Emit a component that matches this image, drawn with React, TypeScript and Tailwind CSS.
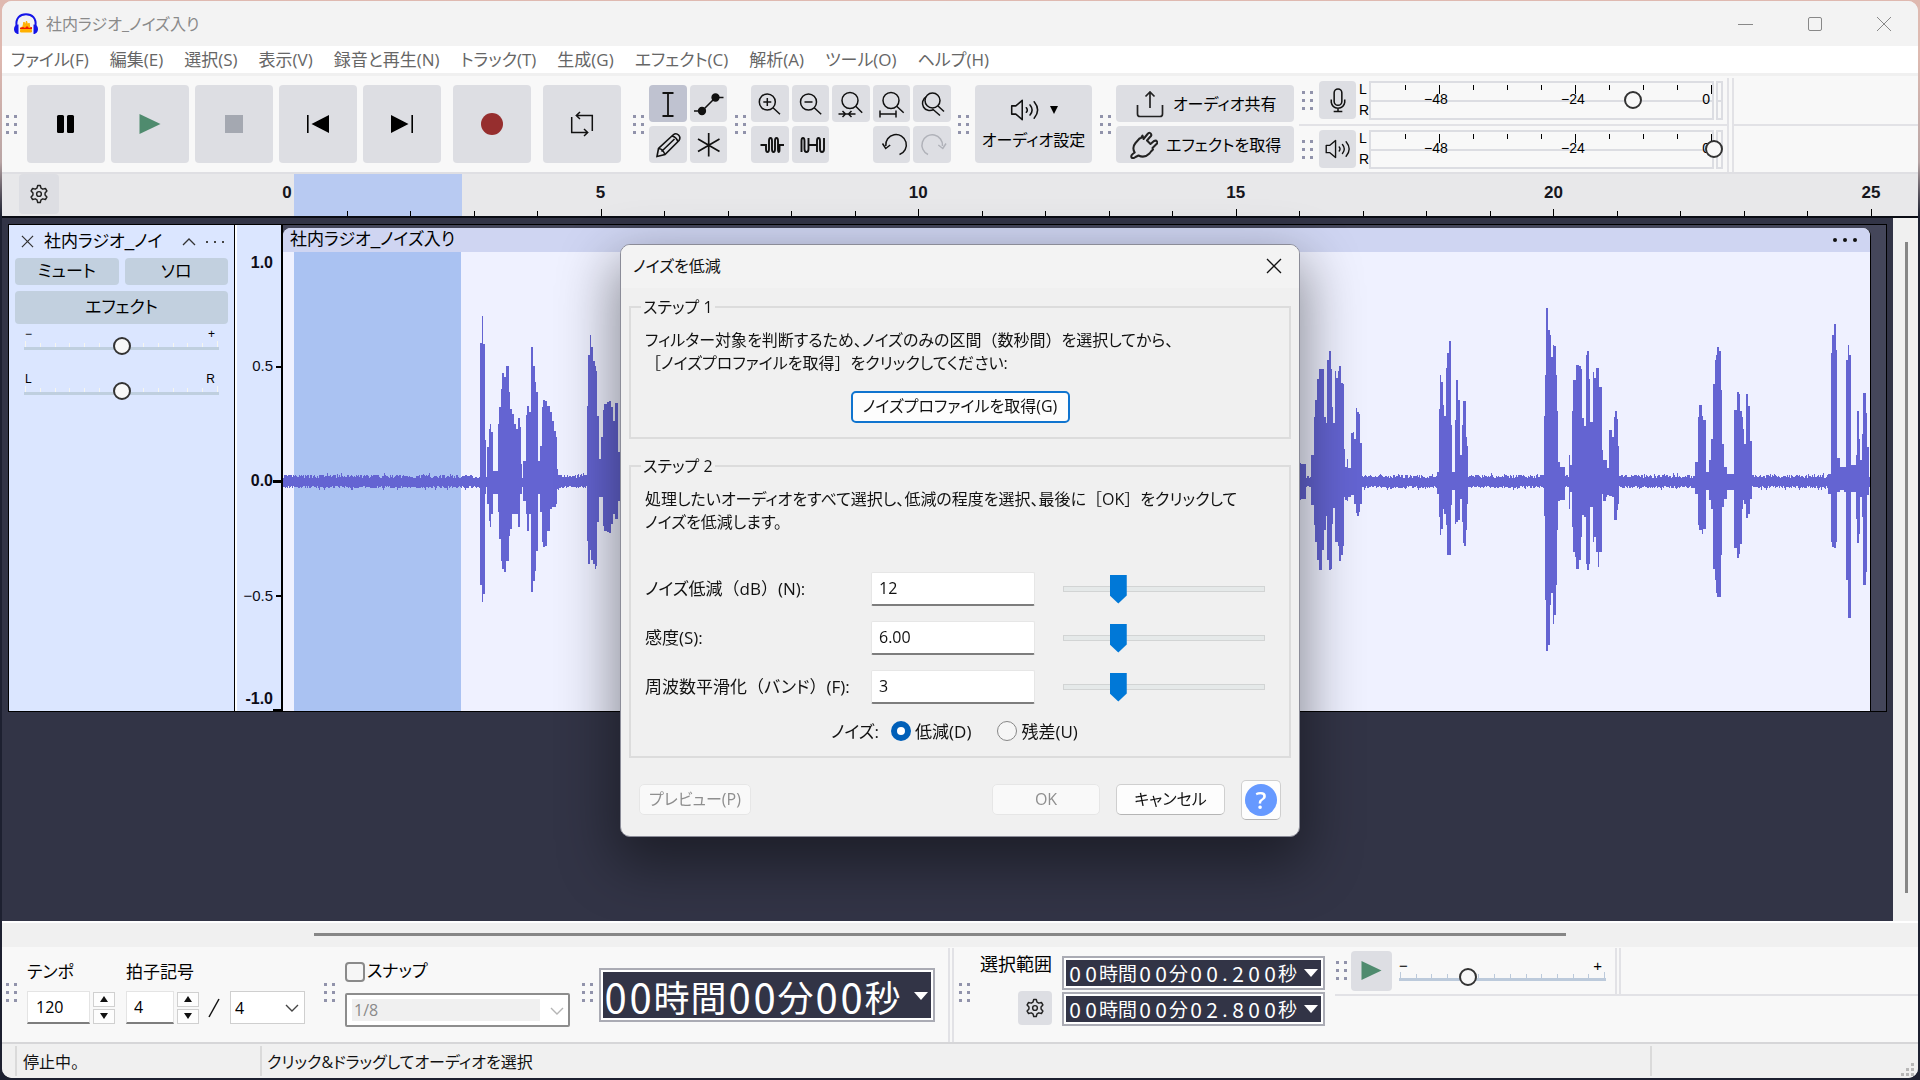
import React from "react";

const FONT = "font-['Open_Sans','Noto_Sans_CJK_JP',sans-serif] [font-feature-settings:'palt']";
const CANVAS_FONT = "font-['Liberation_Sans','Noto_Sans_CJK_JP',sans-serif] [font-feature-settings:'palt']";

/* ---------- waveform ---------- */

type Segment = { origin: number; scale: number; mid: number; steps: string };

// Each step is "x,top,bottom"; it holds until the next one. "x" alone means background noise.
const SEGMENTS: Segment[] = [
  {
    origin: 0, scale: 2.45, mid: 814,
    steps:
      "1160 1176,396,1122 1180,315,1175 1184,400,1150 1188,688,850 1191 1194,710,880 1199,656,930 1201,640,948 1204,665,910 1209,780,850 1219,640,905 1223,590,985 1227,535,1052 1231,487,1075 1236,498,1085 1240,465,1050 1246,545,975 1250,595,955 1255,610,910 1260,640,910 1265,655,910 1269,622,948 1274,650,850 1276,760,850 1280 1282,750,870 1289,612,910 1292,585,960 1297,605,910 1301,409,1145 1307,465,1110 1310,515,1080 1314,545,1020 1319,750,850 1323,705,905 1327,590,995 1331,568,1008 1336,570,1005 1341,587,960 1348,605,895 1353,630,890 1358,662,890 1361,680,880 1365,775,835 1368 1437,585,990 1441,432,1060 1445,374,1018 1449,410,1048 1453,450,1060 1457,465,1075 1460,482,1065 1463,616,935 1467,745,860 1473,680,860 1477,598,945 1481,580,960 1487,575,963 1493,572,967 1498,588,940 1502,630,910 1506,577,925 1513,725,870 1519",
  },
  {
    origin: 1290, scale: 2.489, mid: 785,
    steps:
      "24,727,838 28,730,835 40 52,705,855 60,590,915 63,538,965 67,475,1018 71,447,1050 76,445,1050 80,447,988 85,590,930 89,608,888 93,420,1018 97,393,1050 101,447,1045 105,560,910 107,608,862 111,452,965 115,473,965 119,452,978 123,438,1022 126,487,1005 132,490,978 134,685,830 138,740,840 141,717,843 145,743,830 152,638,825 156,636,825 160,655,850 164,563,878 168,575,887 172,582,875 175,668,850 179 " +
      "367,755,820 370,565,890 374,465,945 377,485,925 380,555,865 384,588,880 388,443,915 392,398,1005 396,362,1005 400,613,855 402,755,810 410,600,910 414,478,905 418,538,900 422,705,835 427,613,905 430,542,968 434,542,977 437,650,928 440,678,850 444 " +
      "632,588,888 635,465,1140 638,262,1293 642,330,1275 646,345,1153 650,410,1118 654,375,1212 657,376,1185 661,465,1095 664,573,928 668,725,843 672,740,840 684 694,705,865 698,735,815 702,573,920 705,480,995 709,478,1010 713,433,1045 720,437,1018 724,447,950 727,592,885 732,617,890 736,405,1030 740,393,1050 743,475,1030 747,605,860 753,456,965 757,474,950 762,442,995 766,443,1040 769,500,995 776,690,820 780,718,843 786,720,830 790,744,825 795,630,827 802,650,830 806,590,900 810,573,900 813,597,870 817,677,850 820 " +
      "1009,725,820 1015,590,915 1018,555,930 1026,587,940 1029,598,925 1036,755,810 1043,718,840 1048,655,865 1053,490,1045 1057,418,1080 1060,405,1118 1064,380,1130 1068,393,1130 1072,510,1005 1075,672,860 1079,740,835 1088,760,810 1105,570,983 1113,515,1013 1117,522,1000 1120,573,970 1124,590,865 1127,625,840 1131,670,850 1135,520,892 1139,556,882 1145,662,835 1149 " +
      "1340,760,820 1347,398,965 1350,345,980 1354,312,983 1358,388,965 1362,713,815 1368,740,810 1380,740,815 1385,420,1080 1389,375,1193 1392,405,1193 1396,735,815 1408,705,895 1411,573,968 1415,655,940 1418,718,830 1424,640,890 1426,519,1095 1434,577,1055 1437,680,825 1441",
  },
];

const CLIP_START = 283;
const CLIP_WIDTH = 1587;

function buildWave(): string {
  let seed = 7;
  const rnd = () => {
    seed = (seed * 16807) % 2147483647;
    return seed / 2147483647;
  };
  const up: number[] = [];
  const down: number[] = [];
  for (let i = 0; i < CLIP_WIDTH; i++) {
    up.push(4 + rnd() * 3.5 + (rnd() > 0.93 ? 2 : 0));
    down.push(4 + rnd() * 2.5 + (rnd() > 0.93 ? 2 : 0));
  }
  for (const seg of SEGMENTS) {
    const steps = seg.steps.split(" ").map((s) => s.split(",").map(Number));
    for (let k = 0; k < steps.length - 1; k++) {
      if (steps[k].length < 3) continue;
      const from = Math.round(seg.origin + steps[k][0] / seg.scale) - CLIP_START;
      const to = Math.round(seg.origin + steps[k + 1][0] / seg.scale) - CLIP_START;
      for (let i = from; i < to && i < CLIP_WIDTH; i++) {
        up[i] = (seg.mid - steps[k][1]) / 3;
        down[i] = (steps[k][2] - seg.mid) / 3;
      }
    }
  }
  const mid = 230;
  return up.map((u, i) => `M${i} ${Math.round(mid - u)}h1V${Math.round(mid + down[i])}h-1z`).join("");
}

const WAVE = buildWave();

/* ---------- small parts ---------- */

function Grip() {
  return (
    <div className="grid shrink-0 grid-cols-2 gap-x-[5px] gap-y-[5px]" aria-hidden="true">
      {[0, 1, 2, 3, 4, 5].map((i) => (
        <span key={i} className="size-[3px] bg-[#9193ab]" />
      ))}
    </div>
  );
}

function BigButton({ label, className = "", children }: { label: string; className?: string; children: React.ReactNode }) {
  return (
    <button aria-label={label} className={`flex h-[78px] w-[78px] shrink-0 items-center justify-center rounded-[4px] bg-[#dddee3] ${className}`}>
      {children}
    </button>
  );
}

function Tool({ label, active = false, dim = false, children }: { label: string; active?: boolean; dim?: boolean; children: React.ReactNode }) {
  return (
    <button aria-label={label} className={`h-[37px] rounded-[4px] ${active ? "bg-[#bfc2d0]" : "bg-[#dddee3]"}`}>
      <svg viewBox="0 0 37 37" className="mx-auto h-[37px] w-[37px]" fill="none" stroke={dim ? "#b0b2b9" : "#111"} strokeWidth="1.5">
        {children}
      </svg>
    </button>
  );
}

function Gear() {
  return (
    <svg viewBox="0 0 24 24" className="size-[22px]" fill="none" stroke="#222" strokeWidth="1.6" strokeLinejoin="round">
      <path d="M9.8 5.6 10.6 2.8h2.8l.8 2.8 1.9 1.1 2.9-.7 1.6 2.6-2 2.2v2.4l2 2.2-1.6 2.6-2.9-.7-1.9 1.1-.8 2.8h-2.8l-.8-2.8-1.9-1.1-2.9.7-1.6-2.6 2-2.2v-2.4l-2-2.2L5 6l2.9.7z" />
      <circle cx="12" cy="12" r="2.6" />
    </svg>
  );
}

function Speaker({ className }: { className: string }) {
  return (
    <svg viewBox="0 0 32 24" className={className} fill="none" stroke="#111" strokeWidth="1.7" strokeLinejoin="round" strokeLinecap="round">
      <path d="M1.500 7.500h4.500L13 1.500v21L6 16.500H1.500z" />
      <path d="M17.500 9.500q2 2.500 0 5M21.500 6.500q4.500 5.500 0 11M26 3q7.500 9 0 18" />
    </svg>
  );
}

function Mic() {
  return (
    <svg viewBox="0 0 18 26" className="h-[25px] w-[18px]" fill="none" stroke="#111" strokeWidth="1.6">
      <rect x="5" y="1" width="8" height="17" rx="4" />
      <path d="M2 12v3q1 6 7 6t7-6v-3M9 21v3.500M4.500 24.500h9" />
    </svg>
  );
}

function TickRail({ color, ticks, className = "" }: { color: string; ticks: string; className?: string }) {
  return (
    <div className={`flex flex-col ${className}`} aria-hidden="true">
      <div className="flex h-[6px] items-end justify-between px-[1px]">
        {Array.from({ length: 14 }, (_, i) => (
          <span key={i} className={`w-px ${ticks} ${i === 0 || i === 13 ? "h-[6px]" : "h-[4px]"}`} />
        ))}
      </div>
      <div className={`h-[3px] ${color}`} />
    </div>
  );
}

const KNOB =
  "appearance-none bg-transparent [&::-webkit-slider-thumb]:size-[18px] [&::-webkit-slider-thumb]:appearance-none [&::-webkit-slider-thumb]:rounded-full [&::-webkit-slider-thumb]:border-2 [&::-webkit-slider-thumb]:border-solid [&::-webkit-slider-thumb]:border-[#333] [&::-webkit-slider-thumb]:bg-[#f8f8f8]";

function TrackSlider({ left, right, label }: { left: string; right: string; label: string }) {
  return (
    <div className="flex flex-col px-[15px]">
      <div className="flex h-[14px] justify-between px-[1px] text-[12px] leading-[14px] text-black">
        <span>{left}</span>
        <span className="pr-[3px]">{right}</span>
      </div>
      <div className="relative">
        <TickRail color="bg-[#bfcfdf]" ticks="bg-[#f5f5ee]" />
        <input type="range" aria-label={label} defaultValue={50} className={`absolute inset-x-0 -top-[4px] m-0 h-[18px] w-full ${KNOB}`} />
      </div>
    </div>
  );
}

function Meter({ label, icon, value }: { label: string; icon: React.ReactNode; value: number }) {
  return (
    <div className="flex items-center pl-[3px]">
      <Grip />
      <button aria-label={label} className="ml-[6px] flex h-[38px] w-[37px] items-center justify-center rounded-[4px] bg-[#dddee3]">
        {icon}
      </button>
      <div className="ml-[3px] flex h-[38px] w-[10px] flex-col justify-between text-[14px] leading-[17px] text-black">
        <span>L</span>
        <span>R</span>
      </div>
      <div className="relative flex w-[354px] gap-[2px]">
        <div className="relative h-[39px] flex-1 border-2 border-[#dcdde2]">
          <div className="absolute inset-x-0 top-[17px] h-[2px] bg-[#dcdde2]" />
          {Array.from({ length: 10 }, (_, i) => (
            <span
              key={i}
              className={`absolute top-[2px] w-px bg-black ${i % 4 === 1 ? "h-[9px]" : "h-[5px]"}`}
              style={{ left: `${10 + i * 9.97}%` }}
            />
          ))}
          <span className="absolute top-[8px] left-[53px] text-[14px] leading-[17px] text-black">−48</span>
          <span className="absolute top-[8px] left-[190px] text-[14px] leading-[17px] text-black">−24</span>
          <span className="absolute top-[8px] right-[2px] text-[14px] leading-[17px] text-black">0</span>
        </div>
        <div className="flex h-[39px] w-[7px] flex-col border-2 border-[#dcdde2]">
          <div className="mt-[17px] h-[2px] bg-[#dcdde2]" />
        </div>
        <input
          type="range"
          aria-label={`${label} レベル`}
          defaultValue={value}
          className={`absolute top-[10px] left-0 m-0 h-[19px] w-full ${KNOB}`}
        />
      </div>
    </div>
  );
}

/* ---------- dialog ---------- */

// Full-width brackets keep their whole em, unlike the proportional kana around them.
function Wide({ children }: { children: string }) {
  return <span className="[font-feature-settings:normal] [text-spacing-trim:space-all]">{children}</span>;
}

const PARAMS = [
  { id: "nr", name: "ノイズ低減", unit: "dB", key: "(N):", value: "12" },
  { id: "sens", name: "感度", unit: "", key: "(S):", value: "6.00" },
  { id: "smooth", name: "周波数平滑化", unit: "バンド", key: "(F):", value: "3" },
];

function NoiseDialog() {
  return (
    <div className="pointer-events-none fixed inset-0 flex items-center justify-center">
      <div
        role="dialog"
        aria-label="ノイズを低減"
        className={`pointer-events-auto w-[680px] overflow-hidden rounded-[10px] border border-[#8b8c98] bg-[#f0f0f0] text-[16px] leading-[23px] text-[#111] shadow-[0_22px_55px_6px_rgba(0,0,0,0.42)] ${FONT}`}
      >
        <div className="flex h-[43px] items-center justify-between bg-[#f3f3f3] pr-[17px] pl-[12px]">
          <h2>ノイズを低減</h2>
          <button aria-label="閉じる">
            <svg viewBox="0 0 16 16" className="size-[16px]" stroke="#111" strokeWidth="1.3">
              <path d="M1 1l14 14M15 1L1 15" />
            </svg>
          </button>
        </div>

        <div className="flex flex-col px-[8px] pb-[16px]">
          <fieldset className="mt-[8px] flex h-[143px] flex-col border-2 border-[#dcdcdc] px-[14px]">
            <legend className="-ml-[4px] h-[23px] px-[2px]">ステップ 1</legend>
            <p className="mt-[10px]">
              フィルター対象を判断するため、ノイズのみの区間<Wide>（</Wide>数秒間<Wide>）</Wide>を選択してから、
              <br />
              <Wide>［</Wide>ノイズプロファイルを取得<Wide>］</Wide>をクリックしてください:
            </p>
            <button className="mx-auto mt-[16px] h-[32px] w-[219px] rounded-[5px] border-2 border-[#0f74cf] bg-[#fdfdfd]">
              ノイズプロファイルを取得(G)
            </button>
          </fieldset>

          <fieldset className="mt-[16px] flex h-[303px] flex-col border-2 border-[#dcdcdc] px-[14px]">
            <legend className="-ml-[4px] h-[23px] px-[2px]">ステップ 2</legend>
            <p className="mt-[10px]">
              処理したいオーディオをすべて選択し、低減の程度を選択、最後に<Wide>［</Wide>OK<Wide>］</Wide>をクリックして
              <br />
              ノイズを低減します。
            </p>
            <div className="mt-[38px] flex flex-col gap-[15px]">
              {PARAMS.map((p) => (
                <div key={p.id} className="flex h-[34px] items-center">
                  <label htmlFor={p.id} className="w-[226px] text-[17px] whitespace-nowrap">
                    {p.name}
                    {p.unit && (
                      <>
                        <Wide>（</Wide>
                        {p.unit}
                        <Wide>）</Wide>
                      </>
                    )}
                    {p.key}
                  </label>
                  <input
                    id={p.id}
                    defaultValue={p.value}
                    className="h-[34px] w-[164px] rounded-[2px] border border-b-2 border-[#e6e6e6] border-b-[#7d7d7d] bg-white px-[7px] text-[16px]"
                  />
                  <input
                    type="range"
                    aria-label={p.name}
                    defaultValue={25}
                    className="ml-[28px] h-[29px] w-[202px] appearance-none bg-transparent [&::-webkit-slider-runnable-track]:h-[6px] [&::-webkit-slider-runnable-track]:border [&::-webkit-slider-runnable-track]:border-solid [&::-webkit-slider-runnable-track]:border-[#d2d4d4] [&::-webkit-slider-runnable-track]:bg-[#e5e9e9] [&::-webkit-slider-thumb]:-mt-[12px] [&::-webkit-slider-thumb]:h-[29px] [&::-webkit-slider-thumb]:w-[17px] [&::-webkit-slider-thumb]:appearance-none [&::-webkit-slider-thumb]:bg-[#0078d7] [&::-webkit-slider-thumb]:[clip-path:polygon(0_0,100%_0,100%_72%,50%_100%,0_72%)]"
                  />
                </div>
              ))}
            </div>
            <div className="mt-[16px] flex items-center pl-[186px] text-[17px]" role="radiogroup" aria-label="ノイズ">
              <span>ノイズ:</span>
              <label className="ml-[12px] flex items-center gap-[4px]">
                <input
                  type="radio"
                  name="noise"
                  defaultChecked
                  className="size-[20px] appearance-none rounded-full border border-[#868686] bg-[#f6f6f6] checked:border-[6px] checked:border-[#005fb8] checked:bg-white"
                />
                低減(D)
              </label>
              <label className="ml-[26px] flex items-center gap-[4px]">
                <input
                  type="radio"
                  name="noise"
                  className="size-[20px] appearance-none rounded-full border border-[#868686] bg-[#f6f6f6] checked:border-[6px] checked:border-[#005fb8] checked:bg-white"
                />
                残差(U)
              </label>
            </div>
          </fieldset>

          <div className="mt-[22px] flex items-center pr-[10px] pl-[10px]">
            <button disabled className="h-[31px] w-[112px] rounded-[5px] border border-[#e6e6e6] bg-[#f9f9f9] text-[#8f8f8f]">
              プレビュー(P)
            </button>
            <div className="flex-1" />
            <button disabled className="h-[31px] w-[108px] rounded-[5px] border border-[#e6e6e6] bg-[#f9f9f9] text-[#8f8f8f]">
              OK
            </button>
            <button className="ml-[16px] h-[31px] w-[109px] rounded-[5px] border border-[#cfcfcf] border-b-[#b5b5b5] bg-[#fdfdfd]">
              キャンセル
            </button>
            <button aria-label="ヘルプ" className="ml-[16px] flex h-[40px] w-[40px] items-center justify-center rounded-[5px] border border-[#cfcfcf] border-b-[#b5b5b5] bg-[#fdfdfd]">
              <span className="flex size-[32px] items-center justify-center rounded-full bg-[#6699ff] text-[24px] leading-[32px] font-semibold text-white">?</span>
            </button>
          </div>
        </div>
      </div>
    </div>
  );
}

/* ---------- bottom bar parts ---------- */

function TimeField({ text, digit, kanji, dot, label, big = false }: { text: string; digit: string; kanji: string; dot: string; label: string; big?: boolean }) {
  return (
    <div role="group" aria-label={label} className="border-2 border-[#aaabb4] bg-white p-[2px] font-['Noto_Sans_CJK_JP',sans-serif]">
      <div className={`flex items-center bg-[#323446] text-white ${big ? "h-[46px] pt-[2px] pr-[3px]" : "h-[26px] pr-[3px] pl-[1px]"}`}>
        {text.split("").map((c, i) => (
          <span key={i} className={`text-center ${c === "." ? dot : /\d/.test(c) ? digit : kanji}`}>
            {c}
          </span>
        ))}
        <div className="flex-1" />
        <button aria-label={`${label} 形式`}>
          <svg viewBox="0 0 14 8" className="h-[8px] w-[14px]" fill="#fff">
            <path d="M0 0h14L7 8z" />
          </svg>
        </button>
      </div>
    </div>
  );
}

function Spinner({ label }: { label: string }) {
  return (
    <div className="ml-[3px] flex w-[22px] flex-col gap-[2px]">
      <button aria-label={`${label} 増`} className="flex h-[15px] items-center justify-center border border-[#d0d0d0] bg-[#fdfdfd]">
        <svg viewBox="0 0 8 6" className="h-[6px] w-[8px]" fill="#111"><path d="M4 0l4 6H0z" /></svg>
      </button>
      <button aria-label={`${label} 減`} className="flex h-[15px] items-center justify-center border border-[#d0d0d0] bg-[#fdfdfd]">
        <svg viewBox="0 0 8 6" className="h-[6px] w-[8px]" fill="#111"><path d="M4 6l4-6H0z" /></svg>
      </button>
    </div>
  );
}

function Chevron({ color, className }: { color: string; className: string }) {
  return (
    <svg viewBox="0 0 14 8" className={`pointer-events-none absolute h-[8px] w-[14px] ${className}`} fill="none" stroke={color} strokeWidth="1.4">
      <path d="M1 1l6 6 6-6" />
    </svg>
  );
}

/* ---------- page ---------- */

const MENUS = ["ファイル(F)", "編集(E)", "選択(S)", "表示(V)", "録音と再生(N)", "トラック(T)", "生成(G)", "エフェクト(C)", "解析(A)", "ツール(O)", "ヘルプ(H)"];

export default function App() {
  return (
    <div className="h-screen min-h-[900px] w-full overflow-hidden bg-gradient-to-b from-[#dfb9b0] from-5% via-[#b9a5a5] via-15% to-[#1d2030] to-20% px-[2px] pt-px pb-[2px]">
      <div className={`flex h-full flex-col overflow-hidden rounded-[10px] bg-[#f8f8f8] ${FONT}`}>
        {/* title bar */}
        <header className="flex h-[45px] shrink-0 items-center bg-[#f3f3f3] pr-[26px] pl-[11px]">
          <svg viewBox="0 0 26 22" className="h-[22px] w-[26px]">
            <path d="M7.500 19L8 14l1.500 1L11 9l1 4 1.500-5 1.500 5 1-3 1 5 1-1 .5 5z" fill="#ffb000" stroke="#ffb000" strokeWidth="1" />
            <path d="M7 15l3-1 2 1 2-2 2 2 3-1v2H7z" fill="#f01800" />
            <path d="M3.500 13C2.500 5 7 1.300 13 1.300S23.500 5 22.500 13" fill="none" stroke="#1414e8" strokeWidth="2" />
            <path d="M5.500 11.500v9.500C2.500 21 1 18.500 1 16s1.500-4.500 4.500-4.500zM20.500 11.500v9.500c3 0 4.500-2.500 4.500-5s-1.500-4.500-4.500-4.500z" fill="#1414e8" />
          </svg>
          <h1 className="ml-[7px] text-[16px] leading-[24px] text-[#8a8a8a]">社内ラジオ_ノイズ入り</h1>
          <div className="flex-1" />
          <div className="flex gap-[53px]">
            <button aria-label="最小化">
              <svg viewBox="0 0 16 16" className="size-[16px]" stroke="#888"><path d="M0 8.500h15" /></svg>
            </button>
            <button aria-label="最大化">
              <svg viewBox="0 0 16 16" className="size-[16px]" fill="none" stroke="#888"><rect x="1.500" y="1.500" width="13" height="13" rx="1.500" /></svg>
            </button>
            <button aria-label="閉じる">
              <svg viewBox="0 0 16 16" className="size-[16px]" stroke="#888"><path d="M1 1l14 14M15 1L1 15" /></svg>
            </button>
          </div>
        </header>

        {/* menu bar */}
        <nav className="flex h-[30px] shrink-0 items-center gap-[21px] border-b-3 border-[#f0f0f0] bg-white pl-[9px] text-[17px] leading-[24px] text-[#666]">
          {MENUS.map((m) => (
            <button key={m} className="whitespace-nowrap">{m}</button>
          ))}
        </nav>

        {/* tool bar */}
        <div className="flex h-[98px] shrink-0 border-b-2 border-[#dfdfe3]">
          <div className="flex items-center pl-[4px]">
            <Grip />
            <BigButton label="一時停止" className="ml-[10px]">
              <svg viewBox="0 0 20 20" className="size-[20px]"><rect x="1" y="1" width="7" height="18" rx="1.500" /><rect x="11" y="1" width="7" height="18" rx="1.500" /></svg>
            </BigButton>
            <BigButton label="再生" className="ml-[6px]">
              <svg viewBox="0 0 22 22" className="size-[22px]"><path d="M.5 1v20L21.500 11z" fill="#4f8b6e" /></svg>
            </BigButton>
            <BigButton label="停止" className="ml-[6px]">
              <span className="size-[18px] bg-[#a4a8b1]" />
            </BigButton>
            <BigButton label="先頭へ" className="ml-[6px]">
              <svg viewBox="0 0 22 20" className="h-[20px] w-[22px]"><path d="M0 1h1.600v18H0zM22 1v18L4.500 10z" /></svg>
            </BigButton>
            <BigButton label="末尾へ" className="ml-[6px]">
              <svg viewBox="0 0 22 20" className="h-[20px] w-[22px]"><path d="M22 1h-1.600v18H22zM0 1v18l17.500-9z" /></svg>
            </BigButton>
            <BigButton label="録音" className="ml-[12px]">
              <span className="size-[22px] rounded-full bg-[#962e2e]" />
            </BigButton>
            <BigButton label="ループ" className="ml-[12px]">
              <svg viewBox="0 0 24 26" className="h-[26px] w-[24px]" fill="none" stroke="#111" strokeWidth="1.500">
                <path d="M1.700 6v15.500h16M22.300 20V4.500h-16M10 1L6.300 4.500 10 8M14 18l3.700 3.500L14 25" />
              </svg>
            </BigButton>
          </div>

          <div className="flex items-center pl-[12px]">
            <Grip />
            <div className="ml-[5px] grid w-[78px] grid-cols-2 gap-x-[3px] gap-y-[4px]">
              <Tool label="選択ツール" active><path d="M19 8v23M13.500 8h11M13.500 31h11" strokeWidth="1.800" /></Tool>
              <Tool label="エンベロープ"><path d="M4 26h8L25.500 12.500h8" /><circle cx="12" cy="26" r="3.400" fill="#111" /><circle cx="25.500" cy="12.500" r="3.400" fill="#111" /></Tool>
              <Tool label="描画"><path d="M8 30.500l1.500-8L24 9q3-2.500 5.500 0t.5 5.500L16 28.500zM9.500 22.500q4 0 6.500 6M23 10q4.500 1 6 6M12.500 25.500L25.500 13" strokeWidth="1.600" /></Tool>
              <Tool label="マルチツール"><path d="M18.700 7v23.500M8 13l21.500 12.500M29.500 13L8 25.500" strokeWidth="1.700" /></Tool>
            </div>
          </div>

          <div className="flex items-center pl-[8px]">
            <Grip />
            <div className="ml-[5px] grid w-[200px] grid-cols-5 gap-x-[3px] gap-y-[4px]">
              <Tool label="拡大"><circle cx="16.300" cy="17" r="8" /><path d="M22 22.700l7 6.500M12.300 17h8M16.300 13v8" /></Tool>
              <Tool label="縮小"><circle cx="16.500" cy="17" r="8" /><path d="M22.200 22.700l7 6.500M12.500 17h8" /></Tool>
              <Tool label="選択範囲に合わせる"><circle cx="18" cy="15.500" r="8" /><path d="M23.700 21.200l6.500 6.500M6.500 29h17M10.500 26l3 3-3 3M19.500 26l-3 3 3 3" /></Tool>
              <Tool label="プロジェクトに合わせる"><circle cx="18" cy="15.500" r="8" /><path d="M23.700 21.200l7 6.500M7 29h16M7 25.500v7M23 25.500v7" /></Tool>
              <Tool label="ズーム切り替え"><circle cx="18.500" cy="15.500" r="7.500" /><path d="M24 21l6 5.500M12 12a7 7 0 1 0 7.500 12.500M18.500 24l7.500 6.500" /></Tool>
              <Tool label="トリム"><path strokeWidth="1.900" d="M9.500 19H15v4q0 3 1.500 3t1.500-3v-8q0-3 1.500-3t1.500 3v8q0 3 1.500 3t1.500-3v-8q0-3 1.500-3t1.500 3v8q0 3 .8 3t.7-3v-4h4.500" /></Tool>
              <Tool label="無音化"><path strokeWidth="1.900" d="M9.500 26V15q0-3 1.500-3t1.500 3v8q0 3 2 3t2-3V12M16.500 19h8M25 26V15q0-3 1.500-3t1.500 3v8q0 3 2 3t2-3V12" /></Tool>
              <span />
              <Tool label="元に戻す"><path d="M26.500 28.500A10.300 10.300 0 1 0 12.800 20" /><path d="M9.500 17.500l3.200 5 4.500-3.500" /></Tool>
              <Tool label="やり直し" dim><path d="M14 28.500A10.300 10.300 0 1 1 28.500 20" /><path d="M32 17.500l-3.200 5-4.500-3.500" /></Tool>
            </div>
          </div>

          <div className="flex items-center pl-[7px]">
            <Grip />
            <button className="ml-[6px] flex h-[78px] w-[117px] flex-col items-center justify-center gap-[8px] rounded-[4px] bg-[#dddee3] pt-[2px] text-[16px] leading-[22px] text-black">
              <span className="flex items-center gap-[10px]">
                <Speaker className="h-[22px] w-[30px]" />
                <svg viewBox="0 0 8 8" className="size-[8px]"><path d="M0 0h8L4 8z" /></svg>
              </span>
              オーディオ設定
            </button>
          </div>

          <div className="flex items-center pl-[8px]">
            <Grip />
            <div className="ml-[5px] flex w-[178px] flex-col gap-[4px] text-[16px] leading-[22px] text-black">
              <button className="flex h-[37px] items-center gap-[9px] rounded-[4px] bg-[#dddee3] pl-[20px]">
                <svg viewBox="0 0 28 28" className="size-[28px]" fill="none" stroke="#222" strokeWidth="1.700">
                  <path d="M1.500 15v9q0 2.500 2.500 2.500h20q2.500 0 2.500-2.500v-9M14 18V2M9.500 6.500L14 2l4.500 4.500" />
                </svg>
                オーディオ共有
              </button>
              <button className="flex h-[37px] items-center gap-[8px] rounded-[4px] bg-[#dddee3] pl-[14px]">
                <svg viewBox="0 0 28 28" className="size-[28px]" fill="none" stroke="#222" strokeWidth="2" strokeLinejoin="round" strokeLinecap="round">
                  <path d="M1.500 26.500q-.8-2 1.200-3.500l2-1.500q-3-5 .8-9.500l4-4.500 1.500-.5 1.500-2.500 1 3.500L18 2.500q2-1.500 3 .5t-1 3L17 9.500l3.500 3.500L24 10q2-1 3 .5t-.5 2.500L22.500 17l.5 1.500-2 2-1.500 2q-5 5-11 2L5.500 26q-2.500 2-4 .5z" />
                </svg>
                エフェクトを取得
              </button>
            </div>
          </div>

          <div className={`ml-[5px] flex flex-1 ${CANVAS_FONT}`}>
            <div className="flex w-[428px] flex-col">
              <div className="flex h-[50px] items-center border-b-2 border-[#e2e2e6]">
                <Meter label="録音メーター" value={76} icon={<Mic />} />
              </div>
              <div className="flex h-[46px] items-center">
                <Meter label="再生メーター" value={100} icon={<Speaker className="h-[20px] w-[26px]" />} />
              </div>
            </div>
            <div className="flex flex-1 flex-col pt-[2px]">
              <div className="flex flex-1 flex-col border-l-2 border-[#e2e2e6] pl-[3px]">
                <div className="flex flex-1 flex-col border-l-2 border-[#e2e2e6]">
                  <div className="h-[48px] border-b-2 border-[#e2e2e6]" />
                </div>
              </div>
            </div>
          </div>
        </div>

        {/* timeline */}
        <div className="flex h-[44px] shrink-0 border-b-2 border-[#0a0c14] bg-[#e8e8ea]">
          <div className="flex w-[281px] items-start pl-[17px]">
            <button aria-label="タイムラインの設定" className="flex h-[40px] w-[40px] items-center justify-center rounded-[4px] bg-[#dddee3]">
              <Gear />
            </button>
          </div>
          <div className="relative mr-[47px] flex-1">
            <div className="absolute inset-y-0 left-[0.7%] w-[10.6%] bg-[#b8caf2]" />
            {Array.from({ length: 26 }, (_, s) => (
              <React.Fragment key={s}>
                {s > 0 && (
                  <span className={`absolute bottom-0 w-px bg-black ${s % 5 === 0 ? "h-[7px]" : "h-[5px]"}`} style={{ left: `${s * 4}%` }} />
                )}
                {s % 5 === 0 && (
                  <span
                    className={`absolute top-[8px] -translate-x-1/2 text-[17px] leading-[22px] font-bold text-[#15151c] ${CANVAS_FONT} ${s === 0 ? "ml-[4px]" : ""}`}
                    style={{ left: `${s * 4}%` }}
                  >
                    {s}
                  </span>
                )}
              </React.Fragment>
            ))}
          </div>
        </div>

        {/* tracks */}
        <main className="flex min-h-0 flex-1 bg-[#f0f0f0]">
          <div className="flex flex-1 flex-col bg-[#323446] pt-[6px] pr-[6px] pl-[6px]">
            <section className={`flex h-[488px] border border-black bg-[#44465a] ${CANVAS_FONT}`}>
              <div className="flex w-[225px] shrink-0 flex-col bg-[#dbe6ff] text-[17px] text-black">
                <div className="flex h-[33px] items-center pr-[9px] pl-[12px]">
                  <button aria-label="トラックを閉じる">
                    <svg viewBox="0 0 14 14" className="size-[13px]" stroke="#333" strokeWidth="1.300"><path d="M1 1l12 12M13 1L1 13" /></svg>
                  </button>
                  <span className="ml-[10px] w-[126px] overflow-hidden leading-[22px] whitespace-nowrap">社内ラジオ_ノイ</span>
                  <button aria-label="折りたたむ" className="ml-[12px]">
                    <svg viewBox="0 0 14 8" className="h-[8px] w-[14px]" fill="none" stroke="#333" strokeWidth="1.300"><path d="M1 7l6-6 6 6" /></svg>
                  </button>
                  <button aria-label="トラックメニュー" className="ml-[10px] flex gap-[6px]">
                    <span className="size-[2px] bg-[#444]" /><span className="size-[2px] bg-[#444]" /><span className="size-[2px] bg-[#444]" />
                  </button>
                </div>
                <div className="flex gap-[6px] px-[6px] text-[17px] leading-[22px]">
                  <button className="h-[27px] flex-1 rounded-[4px] bg-[#c2d0df]">ミュート</button>
                  <button className="h-[27px] flex-1 rounded-[4px] bg-[#c2d0df]">ソロ</button>
                </div>
                <div className="flex px-[6px] pt-[6px] pb-[3px] text-[17px] leading-[22px]">
                  <button className="h-[33px] flex-1 rounded-[4px] bg-[#c2d0df]">エフェクト</button>
                </div>
                <TrackSlider left="−" right="+" label="音量" />
                <div className="h-[22px]" />
                <TrackSlider left="L" right="R" label="パン" />
              </div>

              <div className="flex w-[47px] shrink-0 border-l border-black bg-[#dbe6ff]">
                <div className="relative flex flex-1 flex-col items-end justify-between border-l-2 border-white pt-[27px] pr-[8px] pb-[1px] text-[16px] leading-[22px] text-[#0d0d18]">
                  <b>1.0</b>
                  <span className="mb-[12px] text-[15px]">0.5</span>
                  <b>0.0</b>
                  <span className="mt-[12px] text-[15px]">−0.5</span>
                  <b>-1.0</b>
                  <span className="absolute top-[141px] right-0 h-[2px] w-[5px] bg-black" />
                  <span className="absolute top-[255px] right-0 h-[3px] w-[8px] bg-black" />
                  <span className="absolute top-[370px] right-0 h-[2px] w-[5px] bg-black" />
                  <span className="absolute right-0 bottom-0 h-[2px] w-[8px] bg-black" />
                </div>
              </div>

              <div className="flex min-w-0 flex-1 flex-col border-l-2 border-black bg-[#44465a] pt-[3px]">
                <div className="mr-[15px] flex flex-1 flex-col overflow-hidden rounded-t-[8px] border-r border-black bg-[#eff1ff]">
                  <div className="flex h-[24px] items-center justify-between bg-[#cfd5f2] pr-[13px] pl-[7px]">
                    <span className="text-[17px] leading-[22px] text-black">社内ラジオ_ノイズ入り</span>
                    <button aria-label="クリップメニュー" className="flex gap-[6px]">
                      <span className="size-[4px] rounded-full bg-[#111]" /><span className="size-[4px] rounded-full bg-[#111]" /><span className="size-[4px] rounded-full bg-[#111]" />
                    </button>
                  </div>
                  <div className="min-h-0 flex-1">
                    <svg viewBox="0 0 1587 459" preserveAspectRatio="none" className="h-full w-full" shapeRendering="crispEdges">
                      <rect x="11" y="0" width="167" height="459" fill="#aac2f2" />
                      <path d={WAVE} fill="#6464d2" />
                    </svg>
                  </div>
                </div>
              </div>
            </section>
          </div>
          <div className="flex w-[25px] flex-col items-center pt-[24px] pb-[28px]">
            <div className="ml-[2px] w-[3px] flex-1 bg-[#868686]" />
          </div>
        </main>

        {/* horizontal scroll bar */}
        <div className="flex h-[26px] shrink-0 items-center border-t-2 border-white bg-[#f0f0f0] pr-[352px] pb-[2px] pl-[312px]">
          <div className="h-[3px] flex-1 bg-[#868686]" />
        </div>

        {/* bottom tool bar */}
        <div className={`flex h-[97px] shrink-0 border-b-2 border-[#d6d6d8] text-[17px] leading-[22px] text-black ${CANVAS_FONT}`}>
          <div className="flex items-center pb-[4px] pl-[4px]">
            <Grip />
          </div>
          <div className="ml-[10px] flex flex-col pt-[15px]">
            <label htmlFor="tempo">テンポ</label>
            <div className="mt-[7px] flex items-center">
              <input id="tempo" defaultValue="120" className={`h-[33px] w-[63px] border border-b-2 border-[#e4e4e4] border-b-[#7d7d7d] bg-white px-[8px] text-[16px] ${FONT}`} />
              <Spinner label="テンポ" />
            </div>
          </div>
          <div className="ml-[11px] flex flex-col pt-[15px]">
            <label htmlFor="upper">拍子記号</label>
            <div className="mt-[7px] flex items-center">
              <input id="upper" defaultValue="4" className={`h-[33px] w-[48px] border border-b-2 border-[#e4e4e4] border-b-[#7d7d7d] bg-white px-[7px] text-[16px] ${FONT}`} />
              <Spinner label="拍子" />
              <svg viewBox="0 0 12 20" className="ml-[9px] h-[20px] w-[12px]" stroke="#111" strokeWidth="1.500" aria-label="/"><path d="M1 19L11 1" /></svg>
              <div className="relative ml-[10px]">
                <select aria-label="拍子の分母" className={`h-[33px] w-[75px] appearance-none border border-[#cfcfcf] bg-white px-[4px] text-[16px] ${FONT}`}>
                  <option>4</option>
                </select>
                <Chevron color="#444" className="top-[13px] right-[6px]" />
              </div>
            </div>
          </div>

          <div className="ml-[19px] flex items-center pb-[4px]">
            <Grip />
          </div>
          <div className="ml-[10px] flex flex-col pt-[14px]">
            <label className="flex items-center gap-[2px]">
              <input type="checkbox" className="size-[20px] appearance-none rounded-[4px] border-2 border-[#8a8a8a] bg-[#f6f6f6]" />
              スナップ
            </label>
            <div className="relative mt-[10px]">
              <select disabled aria-label="スナップ単位" className={`h-[34px] w-[225px] appearance-none rounded-[2px] border-2 border-[#8d8d8d] bg-white p-[5px] text-[16px] opacity-100 ${FONT}`}>
                <option>1/8</option>
              </select>
              <div className={`pointer-events-none absolute top-[6px] left-[7px] h-[22px] w-[188px] bg-[#f0f0f0] pl-[2px] text-[16px] leading-[22px] text-[#8a8a8a] ${FONT}`} aria-hidden="true">
                1/8
              </div>
              <Chevron color="#b5b5b5" className="top-[14px] right-[6px]" />
            </div>
          </div>

          <div className="ml-[12px] flex items-center pb-[4px]">
            <Grip />
          </div>
          <div className="ml-[6px] flex items-center">
            <div className="w-[336px] text-[36px] leading-[46px]">
              <TimeField big label="時間" text="00時間00分00秒" digit="w-[25px] text-[40px]" kanji="w-[37px]" dot="w-[12px]" />
            </div>
          </div>
          <div className="mt-[1px] ml-[13px] w-[6px] border-x-2 border-[#e2e2e6]" />

          <div className="ml-[5px] flex items-center pb-[4px]">
            <Grip />
          </div>
          <div className="ml-[9px] flex w-[73px] flex-col items-end pt-[7px] text-[18px] whitespace-nowrap">
            <span>選択範囲</span>
            <button aria-label="選択範囲の設定" className="mt-[15px] flex h-[34px] w-[34px] items-center justify-center rounded-[4px] bg-[#dddee3]">
              <Gear />
            </button>
          </div>
          <div className="ml-[10px] flex w-[263px] flex-col gap-[2px] pt-[9px] text-[19px] leading-[26px]">
            <TimeField label="選択開始" text="00時間00分00.200秒" digit="w-[16px] text-[21px]" kanji="w-[19px]" dot="w-[10px]" />
            <TimeField label="選択終了" text="00時間00分02.800秒" digit="w-[16px] text-[21px]" kanji="w-[19px]" dot="w-[10px]" />
          </div>

          <div className="ml-[10px] flex flex-1 flex-col">
            <div className="flex h-[49px] border-b-2 border-[#e2e2e6]">
              <div className="flex items-center pl-[1px]">
                <Grip />
                <button aria-label="指定速度で再生" className="ml-[4px] flex h-[40px] w-[41px] items-center justify-center rounded-[4px] bg-[#dddee3]">
                  <svg viewBox="0 0 22 22" className="size-[21px]"><path d="M.5 1v20L21.500 11z" fill="#4f8b6e" /></svg>
                </button>
                <div className="ml-[7px] flex w-[207px] flex-col">
                  <div className="flex h-[12px] justify-between pr-[4px] text-[15px] leading-[12px]">
                    <span>−</span>
                    <span>+</span>
                  </div>
                  <div className="relative">
                    <TickRail color="bg-[#bccadb]" ticks="bg-[#bccadb]" />
                    <input type="range" aria-label="再生速度" defaultValue={32} className={`absolute inset-x-0 -top-[4px] m-0 h-[18px] w-full ${KNOB}`} />
                  </div>
                </div>
                <div className="mt-[1px] ml-[9px] h-[47px] w-[6px] border-x-2 border-[#e2e2e6]" />
              </div>
            </div>
          </div>
        </div>

        {/* status bar */}
        <footer className="flex h-[34px] shrink-0 items-center bg-[#f0f0f0] text-[16px] leading-[32px] text-[#111]">
          <div className="ml-[13px] h-[30px] w-[245px] border-l-2 border-[#dadada] pl-[6px]">停止中。</div>
          <div className="h-[30px] flex-1 border-l-2 border-[#dadada] pl-[5px]">クリック&amp;ドラッグしてオーディオを選択</div>
          <div className="flex h-[30px] w-[268px] items-end justify-end border-l-2 border-[#dadada] pr-[4px]">
            <svg viewBox="0 0 13 13" className="size-[13px]" fill="#b8b8b8">
              <path d="M10 0h3v3h-3zM5 5h3v3H5zM10 5h3v3h-3zM0 10h3v3H0zM5 10h3v3H5zM10 10h3v3h-3z" />
            </svg>
          </div>
        </footer>
      </div>
      <NoiseDialog />
    </div>
  );
}
